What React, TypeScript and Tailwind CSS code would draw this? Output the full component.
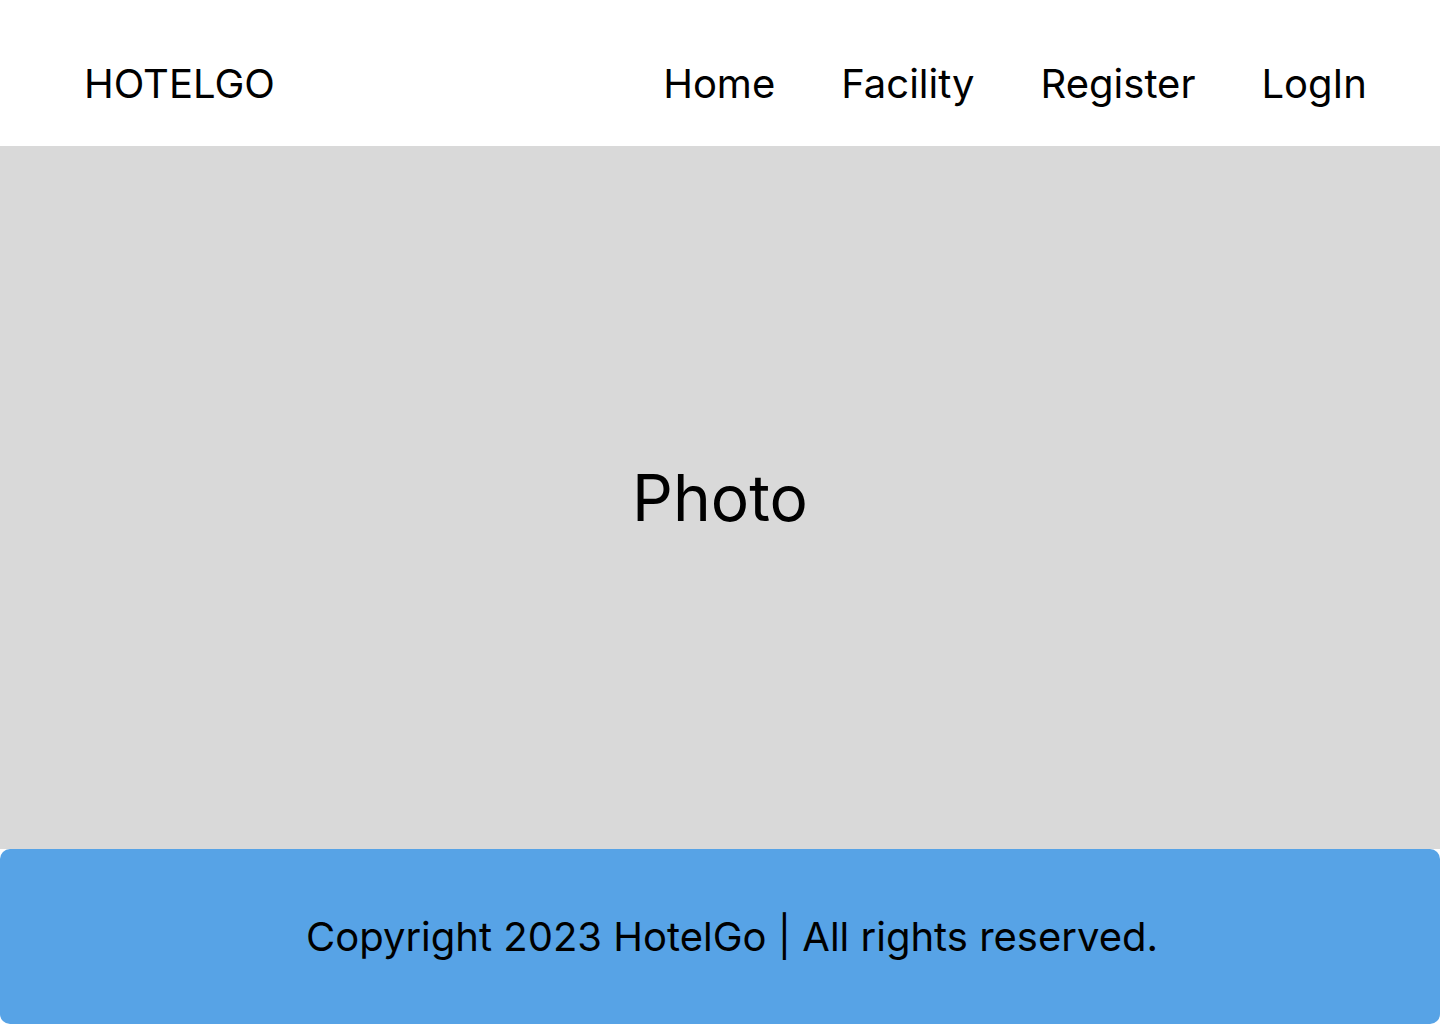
export default function App() {
  return (
    <div className="flex flex-col w-[1440px] h-[1024px] bg-white text-black" style={{ fontFamily: "Inter, 'Noto Sans', sans-serif" }}>
      <header className="flex items-center justify-between h-[146px] pt-[21px] pl-[84px] pr-[73px] shrink-0">
        <div className="text-[40px] leading-none">HOTELGO</div>
        <nav className="flex items-center gap-[66px] text-[40px] leading-none">
          <span>Home</span>
          <span>Facility</span>
          <span>Register</span>
          <span>LogIn</span>
        </nav>
      </header>
      <main className="flex items-center justify-center h-[703px] bg-[#d9d9d9] shrink-0">
        <span className="text-[64px] leading-none">Photo</span>
      </main>
      <footer className="flex items-center justify-center h-[175px] pl-[24px] bg-[#57a3e6] rounded-[10px] shrink-0">
        <span className="text-[40px] leading-none">Copyright 2023 HotelGo | All rights reserved.</span>
      </footer>
    </div>
  );
}
